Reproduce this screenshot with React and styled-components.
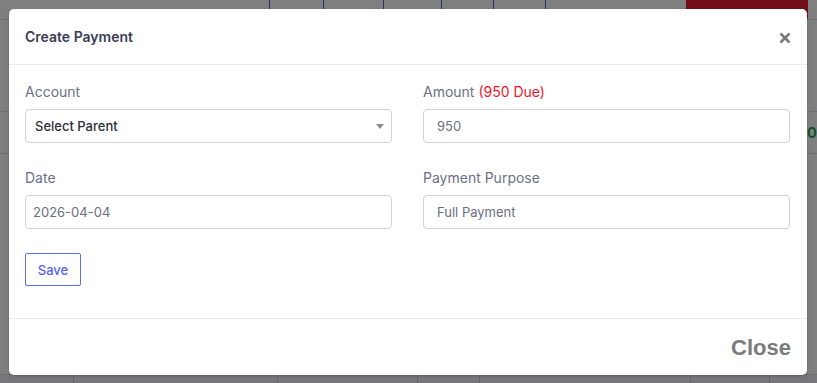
import React from 'react';
import styled, { createGlobalStyle } from 'styled-components';

const GlobalStyle = createGlobalStyle`
	html, body {
		margin: 0;
		padding: 0;
		background: #fff;
		font-family: Inter, "Noto Sans", sans-serif;
	}
	* { box-sizing: border-box; }
`;

const Page = styled.div`
	position: relative;
	width: 817px;
	height: 383px;
	overflow: hidden;
`;

// table that sits behind the modal backdrop
const BehindTable = styled.div`
	display: grid;
	grid-template-columns: 269px 54px 60px 58px 52px 52px 141px 122px 9px;
	grid-template-rows: 20px 92px 42px 221px 30px;
`;

const Cell = styled.div`
	border-left: 1px solid ${p => (p.$lined ? '#5c5cf5' : 'transparent')};
	border-bottom: 1px solid #d8d8e6;
	background: ${p => p.$bg || 'transparent'};
	color: #16a34a;
	font-size: 15px;
	font-weight: 600;
	display: flex;
	align-items: center;
	justify-content: flex-end;
`;

const BottomRow = styled.div`
	grid-column: 1 / -1;
	display: grid;
	grid-template-columns: 73px 204px 140px 62px 211px 79px 1fr;
	background: #eeeef6;
`;

const BottomCell = styled.div`
	border-left: 1px solid ${p => (p.$first ? 'transparent' : '#c8c8d8')};
`;

const Overlay = styled.div`
	position: absolute;
	inset: 0;
	background: rgba(0, 0, 0, 0.5);
	padding: 9px 10px 8px 9px;
`;

const Modal = styled.div`
	background: #fff;
	border-radius: 5px;
	height: 366px;
	display: flex;
	flex-direction: column;
	box-shadow: 0 1px 3px rgba(0, 0, 0, 0.2);
`;

const Header = styled.div`
	height: 56px;
	padding: 0 16px;
	display: flex;
	align-items: center;
	justify-content: space-between;
	border-bottom: 1px solid #e9e9ef;
`;

const Title = styled.h5`
	margin: 0;
	font-size: 14px;
	font-weight: 600;
	color: #3b3d59;
`;

const CloseX = styled.button`
	border: 0;
	background: none;
	padding: 0;
	margin-top: 3px;
	color: #7a7a7a;
	display: flex;
	cursor: pointer;
`;

const Body = styled.div`
	flex: 1;
	padding: 16px 16px 0 16px;
`;

const FormGrid = styled.div`
	display: grid;
	grid-template-columns: 367px 367px;
	column-gap: 31px;
	row-gap: 24px;
`;

const Field = styled.div`
	display: flex;
	flex-direction: column;
`;

const Label = styled.label`
	font-size: 14px;
	line-height: 21px;
	color: #6d6f88;
	margin-bottom: 7px;
`;

const Due = styled.span`
	color: #f0172a;
`;

const InputBox = styled.div`
	position: relative;
	height: 34px;
	border: 1px solid #d2d0e4;
	border-radius: 4px;
	display: flex;
	align-items: center;
	padding-left: ${p => p.$pad || 12}px;
	font-size: 13px;
	color: ${p => (p.$strong ? '#2e2e38' : '#6c6e82')};
	font-weight: ${p => (p.$strong ? 500 : 400)};
`;

const Caret = styled.span`
	position: absolute;
	right: 7px;
	top: 14px;
	width: 0;
	height: 0;
	border-left: 4px solid transparent;
	border-right: 4px solid transparent;
	border-top: 5px solid #8a8a8a;
`;

const SaveButton = styled.button`
	margin-top: 24px;
	width: 56px;
	height: 33px;
	border: 1px solid #5b6cf6;
	border-radius: 2px;
	background: #fff;
	color: #5566ee;
	font-family: Inter, sans-serif;
	font-size: 13px;
	font-weight: 500;
	cursor: pointer;
`;

const Footer = styled.div`
	height: 57px;
	border-top: 1px solid #e9e9ef;
	display: flex;
	align-items: center;
	justify-content: flex-end;
	padding: 0 16px;
`;

const CloseText = styled.span`
	font-family: "Liberation Sans", Arial, sans-serif;
	font-size: 22px;
	font-weight: 700;
	color: #7b7b7b;
	margin-top: 1px;
`;

const columns = [false, true, true, true, true, true, true, false, false];

export default function App() {
	return (
		<>
			<GlobalStyle />
			<Page>
				<BehindTable>
					{columns.map((lined, i) => (
						<Cell key={'h' + i} $lined={lined} $bg={i === 7 ? '#e61c30' : undefined} />
					))}
					{columns.map((lined, i) => (
						<Cell key={'a' + i} />
					))}
					{columns.map((lined, i) => (
						<Cell key={'b' + i}>{i === 8 ? '0' : ''}</Cell>
					))}
					{columns.map((lined, i) => (
						<Cell key={'c' + i} />
					))}
					<BottomRow>
						{[0, 1, 2, 3, 4, 5, 6].map(i => <BottomCell key={i} $first={i === 0} />)}
					</BottomRow>
				</BehindTable>

				<Overlay>
					<Modal>
						<Header>
							<Title>Create Payment</Title>
							<CloseX aria-label="close">
								<svg width="12" height="12" viewBox="0 0 12 12">
									<path d="M1.5 1.5 L10.5 10.5 M10.5 1.5 L1.5 10.5" stroke="currentColor" strokeWidth="2.6" strokeLinecap="butt" />
								</svg>
							</CloseX>
						</Header>
						<Body>
							<FormGrid>
								<Field>
									<Label>Account</Label>
									<InputBox $pad={9} $strong>
										Select Parent
										<Caret />
									</InputBox>
								</Field>
								<Field>
									<Label>Amount <Due>(950 Due)</Due></Label>
									<InputBox $pad={13}>950</InputBox>
								</Field>
								<Field>
									<Label>Date</Label>
									<InputBox $pad={7}>2026-04-04</InputBox>
								</Field>
								<Field>
									<Label>Payment Purpose</Label>
									<InputBox $pad={13}>Full Payment</InputBox>
								</Field>
							</FormGrid>
							<SaveButton>Save</SaveButton>
						</Body>
						<Footer>
							<CloseText>Close</CloseText>
						</Footer>
					</Modal>
				</Overlay>
			</Page>
		</>
	);
}
